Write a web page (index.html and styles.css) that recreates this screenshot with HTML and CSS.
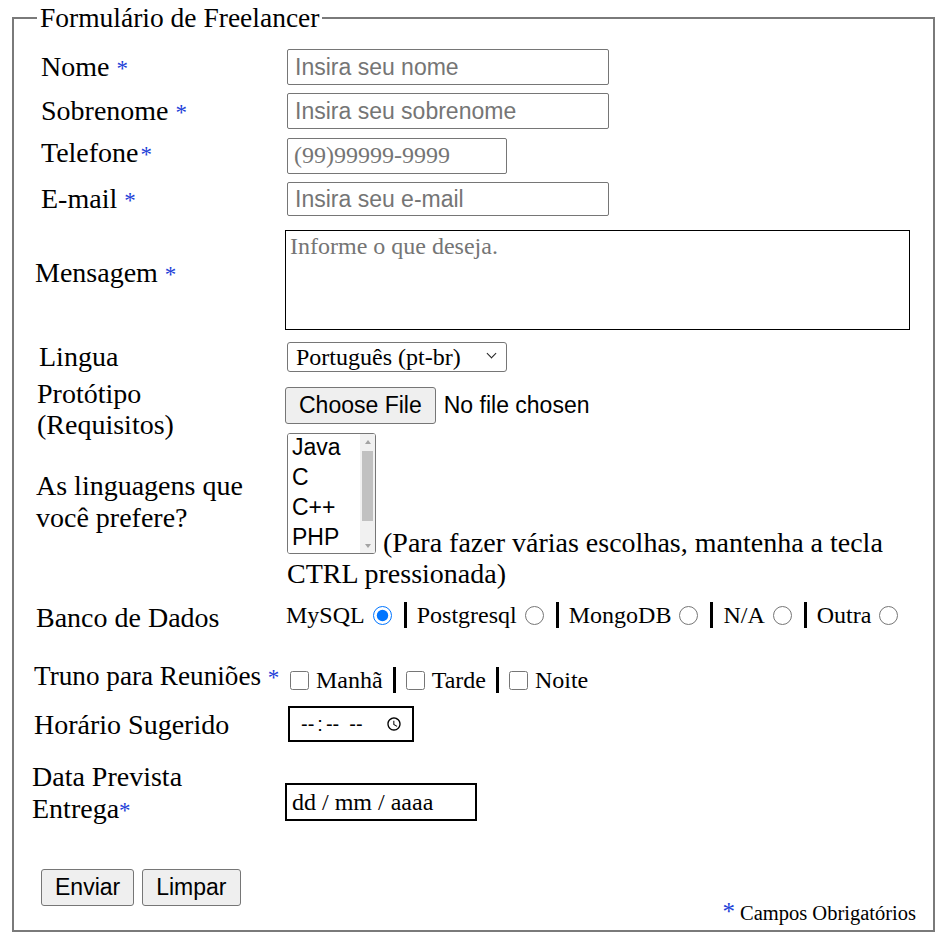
FILE: index.html
```html
<!DOCTYPE html>
<html lang="pt-BR">
<head>
<meta charset="utf-8">
<title>Formulário de Freelancer</title>
<link rel="stylesheet" href="styles.css">
</head>
<body>
<form class="form">
  <fieldset class="box">
    <legend class="box-title">Formulário de Freelancer</legend>

    <div class="row r-nome">
      <label class="lbl ind-9" for="nome">Nome <span class="req">*</span></label>
      <input class="txt txt-wide" id="nome" type="text" placeholder="Insira seu nome">
    </div>

    <div class="row r-sob">
      <label class="lbl ind-9" for="sobrenome">Sobrenome <span class="req">*</span></label>
      <input class="txt txt-wide" id="sobrenome" type="text" placeholder="Insira seu sobrenome">
    </div>

    <div class="row r-tel">
      <label class="lbl ind-9 lbl-tel" for="tel">Telefone<span class="req req-tight">*</span></label>
      <input class="txt txt-tel" id="tel" type="tel" placeholder="(99)99999-9999">
    </div>

    <div class="row r-mail">
      <label class="lbl ind-9" for="email">E-mail <span class="req">*</span></label>
      <input class="txt txt-wide txt-mail" id="email" type="email" placeholder="Insira seu e-mail">
    </div>

    <div class="row r-msg">
      <label class="lbl ind-3 lbl-msg" for="msg">Mensagem <span class="req">*</span></label>
      <textarea class="area" id="msg" placeholder="Informe o que deseja."></textarea>
    </div>

    <div class="row r-lng">
      <label class="lbl ind-7" for="lingua">Lingua</label>
      <span class="sel-wrap">
        <select class="sel" id="lingua">
          <option>Português (pt-br)</option>
          <option>English (en)</option>
          <option>Español (es)</option>
        </select>
      </span>
    </div>

    <div class="row r-proto">
      <label class="lbl ind-5 lbl-proto" for="proto">Protótipo<br>(Requisitos)</label>
      <input class="file" id="proto" type="file">
    </div>

    <div class="row r-langs">
      <label class="lbl ind-4 lbl-langs" for="langs">As linguagens que<br>você prefere?</label>
      <div class="langs-cell">
        <span class="listbox-wrap">
          <select class="listbox" id="langs" multiple size="4">
            <option>Java</option>
            <option>C</option>
            <option>C++</option>
            <option>PHP</option>
            <option>Python</option>
          </select>
          <span class="vscroll" aria-hidden="true"><span class="vs-btn vs-up"></span><span class="vs-thumb"></span><span class="vs-fill"></span><span class="vs-btn vs-down"></span></span>
        </span> (Para fazer várias escolhas, mantenha a tecla CTRL pressionada)
      </div>
    </div>

    <div class="row r-db">
      <span class="lbl ind-4">Banco de Dados</span>
      <div class="choices choices-db">
        <label class="opt-text" for="db1">MySQL</label><input class="radio" type="radio" name="db" id="db1" checked>
        <span class="sep"></span>
        <label class="opt-text" for="db2">Postgresql</label><input class="radio" type="radio" name="db" id="db2">
        <span class="sep"></span>
        <label class="opt-text" for="db3">MongoDB</label><input class="radio" type="radio" name="db" id="db3">
        <span class="sep"></span>
        <label class="opt-text" for="db4">N/A</label><input class="radio" type="radio" name="db" id="db4">
        <span class="sep"></span>
        <label class="opt-text" for="db5">Outra</label><input class="radio" type="radio" name="db" id="db5">
      </div>
    </div>

    <div class="row r-turno">
      <span class="lbl ind-2 lbl-turno">Truno para Reuniões <span class="req">*</span></span>
      <div class="choices choices-turno">
        <input class="check" type="checkbox" id="t1"><label class="opt-text" for="t1">Manhã</label>
        <span class="sep"></span>
        <input class="check" type="checkbox" id="t2"><label class="opt-text" for="t2">Tarde</label>
        <span class="sep"></span>
        <input class="check" type="checkbox" id="t3"><label class="opt-text" for="t3">Noite</label>
      </div>
    </div>

    <div class="row r-hora">
      <label class="lbl ind-2" for="hora">Horário Sugerido</label>
      <input class="time" id="hora" type="time">
    </div>

    <div class="row r-data">
      <label class="lbl ind-0 lbl-data" for="data">Data Prevista<br>Entrega<span class="req">*</span></label>
      <input class="date" id="data" type="text" value="dd / mm / aaaa">
    </div>

    <div class="row r-actions">
      <div class="buttons">
        <button class="btn" type="submit">Enviar</button>
        <button class="btn" type="reset">Limpar</button>
      </div>
      <p class="note"><span class="req req-note">*</span> Campos Obrigatórios</p>
    </div>
  </fieldset>
</form>
</body>
</html>
```

FILE: styles.css
```css
html, body {
  margin: 0;
  background: #fff;
}

body {
  font-family: "Liberation Serif", "Times New Roman", serif;
  color: #000;
}

.form {
  margin: 0;
}

.box {
  margin: 2px 10px 0 12px;
  padding: 0 17px 5px 18px;
  border: 2px solid #7a7a7a;
  min-width: 0;
}

.box-title {
  margin-left: 5px;
  padding: 0 3px;
  font-size: 27.5px;
  line-height: 31px;
}

/* rows */
.row {
  display: flex;
  align-items: center;
}

.lbl {
  flex: none;
  width: 253px;
  box-sizing: border-box;
  font-size: 28px;
  line-height: 31px;
  white-space: nowrap;
}

.ind-0 { padding-left: 0; }
.ind-2 { padding-left: 2px; }
.ind-3 { padding-left: 3px; }
.ind-4 { padding-left: 4px; }
.ind-5 { padding-left: 5px; }
.ind-7 { padding-left: 7px; }
.ind-9 { padding-left: 9px; }

.req {
  color: #1d3fd8;
  font-size: 23px;
}

.req-tight {
  margin-left: 2px;
}

.r-nome { margin-top: 16px; }
.r-sob { margin-top: 8px; }
.r-tel { margin-top: 8px; }
.r-mail { margin-top: 8px; }
.r-msg { margin-top: 14px; }
.r-lng { margin-top: 11px; }
.r-proto { margin-top: 6px; align-items: flex-start; }
.r-langs { margin-top: -7px; align-items: flex-start; }
.r-db { margin-top: 13px; }
.r-turno { margin-top: 28px; align-items: flex-start; }
.r-hora { margin-top: 13px; }
.r-data { margin-top: 19px; }
.r-actions {
  margin-top: 42px;
  align-items: flex-end;
  justify-content: space-between;
}

.lbl-tel { margin-bottom: 4px; }

/* text inputs */
.txt {
  box-sizing: border-box;
  margin: 0 0 0 2px;
  height: 36px;
  padding: 0 7px;
  border: 1px solid #767676;
  border-radius: 2px;
  background: #fff;
  font-family: "Liberation Sans", Arial, sans-serif;
  font-size: 23px;
  color: #000;
}

.txt::placeholder {
  color: #757575;
}

.txt-wide { width: 322px; }
.txt-mail { height: 34px; }

.txt-tel {
  width: 220px;
  padding-left: 6px;
  font-family: "Liberation Serif", "Times New Roman", serif;
  font-size: 24px;
}

.area {
  box-sizing: border-box;
  margin: 0;
  width: 625px;
  height: 100px;
  padding: 2px 4px;
  border: 1px solid #000;
  border-radius: 0;
  font-family: "Liberation Serif", "Times New Roman", serif;
  font-size: 24px;
  resize: none;
}

.area::placeholder {
  color: #757575;
}

.lbl-msg { margin-bottom: 14px; }

.sel-wrap {
  position: relative;
  display: inline-block;
  margin-left: 2px;
}

.sel-wrap::after {
  content: "";
  position: absolute;
  top: 8px;
  right: 12px;
  width: 6px;
  height: 6px;
  border-right: 1.6px solid #222;
  border-bottom: 1.6px solid #222;
  transform: rotate(45deg);
  pointer-events: none;
}

.sel {
  display: block;
  box-sizing: border-box;
  -webkit-appearance: none;
  appearance: none;
  margin: 0;
  width: 220px;
  height: 30px;
  padding: 0 30px 0 8px;
  border: 1px solid #767676;
  border-radius: 3px;
  background: #fff;
  font-family: "Liberation Serif", "Times New Roman", serif;
  font-size: 24px;
  color: #000;
}

.lbl-proto { line-height: 31px; }

.file {
  margin: 9px 0 0 0;
  font-family: "Liberation Sans", Arial, sans-serif;
  font-size: 23px;
  color: #000;
}

.file::file-selector-button {
  box-sizing: border-box;
  height: 37px;
  margin: 0 8px 0 0;
  padding: 0 13px;
  border: 1px solid #767676;
  border-radius: 3px;
  background: #efefef;
  font: inherit;
  color: #000;
}

.lbl-langs {
  margin-top: 37px;
  line-height: 32px;
}

.langs-cell {
  flex: 1;
  padding-left: 2px;
  font-size: 28px;
  line-height: 31px;
}

.listbox-wrap {
  position: relative;
  display: inline-block;
  margin-bottom: 4px;
  vertical-align: text-bottom;
  line-height: 0;
}

.listbox {
  display: block;
  box-sizing: border-box;
  width: 89px;
  height: 121px;
  margin: 0;
  padding: 0;
  border: 1px solid #767676;
  border-radius: 3px;
  font-family: "Liberation Sans", Arial, sans-serif;
  font-size: 23px;
  line-height: normal;
  color: #000;
}

.listbox option {
  padding: 0 4px 2.5px;
}

/* drawn scrollbar lying over the listbox's right edge */
.vscroll {
  position: absolute;
  top: 1px;
  right: 1px;
  bottom: 1px;
  width: 15px;
  display: flex;
  flex-direction: column;
  background: #f1f1f1;
  border-radius: 0 2px 2px 0;
  pointer-events: none;
}

.vs-btn {
  flex: none;
  height: 15px;
  display: flex;
  align-items: center;
  justify-content: center;
}

.vs-btn::before {
  content: "";
  width: 0;
  height: 0;
  border-left: 3.5px solid transparent;
  border-right: 3.5px solid transparent;
}

.vs-up::before {
  border-bottom: 4px solid #a3a3a3;
}

.vs-down::before {
  border-top: 4px solid #a3a3a3;
}

.vs-thumb {
  flex: none;
  height: 70px;
  margin: 2px 2px 0;
  background: #c1c1c1;
}

.vs-fill {
  flex: 1;
}

/* radios / checks */
.choices {
  display: flex;
  align-items: center;
  font-size: 24px;
  line-height: 26px;
}

.choices-db {
  margin: 0 0 5px 1px;
}

.radio,
.check {
  flex: none;
  width: 19px;
  height: 19px;
  margin: 0;
}

.choices-db .radio { margin-left: 8px; }
.choices-db .sep { margin: 0 10px 0 12px; }

.lbl-turno { font-size: 27.2px; }

.choices-turno { margin: 6px 0 0 5px; }
.choices-turno .check { margin-right: 7px; }
.choices-turno .sep { margin: 0 10px; }

.sep {
  flex: none;
  width: 3px;
  height: 26px;
  background: #000;
}

.time {
  box-sizing: border-box;
  margin: 0 0 0 3px;
  width: 126px;
  height: 36px;
  padding: 0 10px 0 8px;
  border: 2px solid #000;
  border-radius: 0;
  background: #fff;
  font-family: "Liberation Sans", Arial, sans-serif;
  font-size: 20px;
  color: #000;
}

.time::-webkit-datetime-edit-hour-field,
.time::-webkit-datetime-edit-minute-field,
.time::-webkit-datetime-edit-ampm-field {
  padding: 0 3px;
}

.time::-webkit-calendar-picker-indicator {
  width: 16px;
  height: 16px;
  padding: 0;
  margin-left: 4px;
}

.lbl-data { line-height: 32px; }

.date {
  box-sizing: border-box;
  margin: 16px 0 0 0;
  width: 192px;
  height: 38px;
  padding: 0 5px;
  border: 2px solid #000;
  border-radius: 0;
  background: #fff;
  font-family: "Liberation Serif", "Times New Roman", serif;
  font-size: 24px;
  color: #000;
}

.buttons {
  display: flex;
  gap: 8px;
  margin: 0 0 19px 9px;
}

.btn {
  box-sizing: border-box;
  height: 37px;
  margin: 0;
  padding: 0 13px;
  border: 1px solid #767676;
  border-radius: 3px;
  background: #efefef;
  font-family: "Liberation Sans", Arial, sans-serif;
  font-size: 23px;
  color: #000;
}

.note {
  margin: 0;
  font-size: 20.5px;
  line-height: 23px;
}

.req-note {
  font-size: 25px;
}
```
